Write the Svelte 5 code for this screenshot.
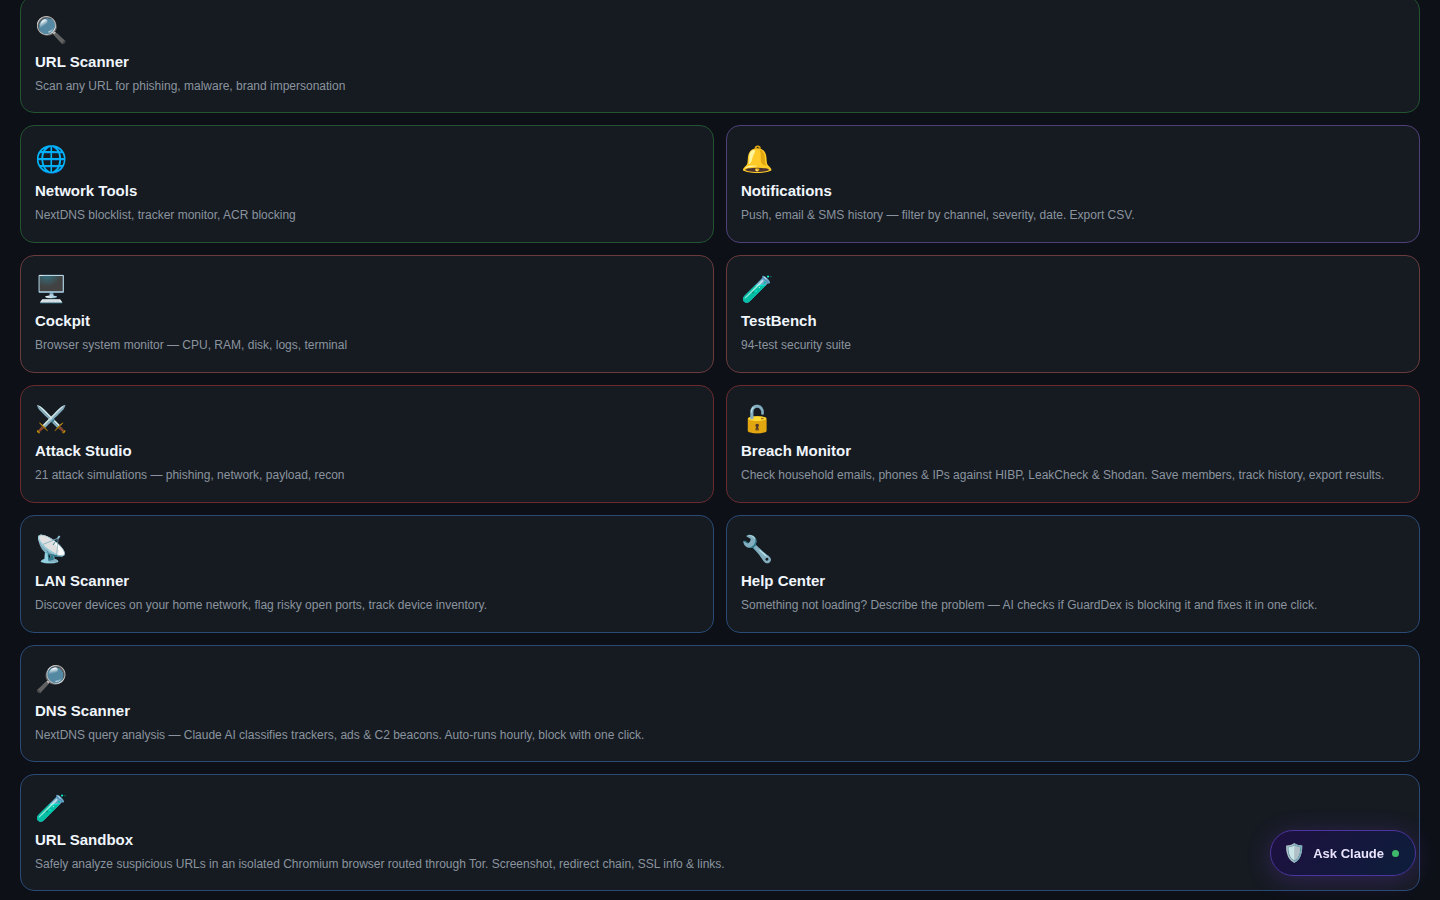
<script lang="ts">
	interface Tool {
		icon: string;
		name: string;
		text: string;
		tone: string;
		wide?: boolean;
	}

	const tools: Tool[] = [
		{ icon: '🔍', name: 'URL Scanner', text: 'Scan any URL for phishing, malware, brand impersonation', tone: 'green', wide: true },
		{ icon: '🌐', name: 'Network Tools', text: 'NextDNS blocklist, tracker monitor, ACR blocking', tone: 'green' },
		{ icon: '🔔', name: 'Notifications', text: 'Push, email & SMS history — filter by channel, severity, date. Export CSV.', tone: 'purple' },
		{ icon: '🖥️', name: 'Cockpit', text: 'Browser system monitor — CPU, RAM, disk, logs, terminal', tone: 'coral' },
		{ icon: '🧪', name: 'TestBench', text: '94-test security suite', tone: 'coral' },
		{ icon: '⚔️', name: 'Attack Studio', text: '21 attack simulations — phishing, network, payload, recon', tone: 'red' },
		{ icon: '🔓', name: 'Breach Monitor', text: 'Check household emails, phones & IPs against HIBP, LeakCheck & Shodan. Save members, track history, export results.', tone: 'red' },
		{ icon: '📡', name: 'LAN Scanner', text: 'Discover devices on your home network, flag risky open ports, track device inventory.', tone: 'blue' },
		{ icon: '🔧', name: 'Help Center', text: 'Something not loading? Describe the problem — AI checks if GuardDex is blocking it and fixes it in one click.', tone: 'blue' },
		{ icon: '🔎', name: 'DNS Scanner', text: 'NextDNS query analysis — Claude AI classifies trackers, ads & C2 beacons. Auto-runs hourly, block with one click.', tone: 'blue', wide: true },
		{ icon: '🧪', name: 'URL Sandbox', text: 'Safely analyze suspicious URLs in an isolated Chromium browser routed through Tor. Screenshot, redirect chain, SSL info & links.', tone: 'blue', wide: true }
	];
</script>

<main class="tools">
	{#each tools as tool}
		<a href="#{tool.name.toLowerCase().replace(' ', '-')}" class="card {tool.tone}" class:wide={tool.wide}>
			<span class="icon">{tool.icon}</span>
			<span class="name">{tool.name}</span>
			<span class="text">{tool.text}</span>
		</a>
	{/each}
</main>

<button class="ask" type="button">
	<span class="shield">🛡️</span>
	<span>Ask Claude</span>
	<span class="dot"></span>
</button>

<style>
	:global(body) {
		background: #0d1117;
		font-family: 'Liberation Sans', Arial, sans-serif;
	}

	.tools {
		display: grid;
		grid-template-columns: 1fr 1fr;
		gap: 12px;
		padding: 0 20px 8px;
		/* the list starts scrolled just past the top edge */
		margin-top: -4px;
	}

	.card {
		display: flex;
		flex-direction: column;
		box-sizing: border-box;
		min-height: 118px;
		padding: 18px 14px 16px;
		border: 1px solid #30363d;
		border-radius: 14px;
		background: #161b22;
		text-decoration: none;
	}

	.wide {
		grid-column: 1 / -1;
		min-height: 117px;
	}

	.green {
		border-color: #23532f;
	}

	.purple {
		border-color: #50407a;
	}

	.coral {
		border-color: #693b3c;
	}

	.red {
		border-color: #6a2a2e;
	}

	.blue {
		border-color: #2a4a75;
	}

	.icon {
		margin-bottom: 8px;
		font-size: 26px;
		line-height: 30px;
	}

	.name {
		margin-bottom: 6px;
		color: #f0f6fc;
		font-size: 15px;
		font-weight: 700;
		line-height: 18px;
	}

	.text {
		color: #8b949e;
		font-size: 12px;
		line-height: 18px;
	}

	.ask {
		position: fixed;
		right: 24px;
		bottom: 24px;
		display: flex;
		align-items: center;
		gap: 8px;
		padding: 10px 16px 10px 12px;
		border: 1px solid #4d34a0;
		border-radius: 50px;
		background: linear-gradient(135deg, #1e1040, #0c1e3a);
		box-shadow: 0 4px 24px rgba(124, 58, 237, 0.25);
		color: #e9e3fb;
		font-family: inherit;
		font-size: 13px;
		font-weight: 700;
		cursor: pointer;
	}

	.shield {
		font-size: 18px;
		line-height: 24px;
	}

	.dot {
		width: 7px;
		height: 7px;
		border-radius: 50%;
		background: #3fb96b;
	}
</style>
